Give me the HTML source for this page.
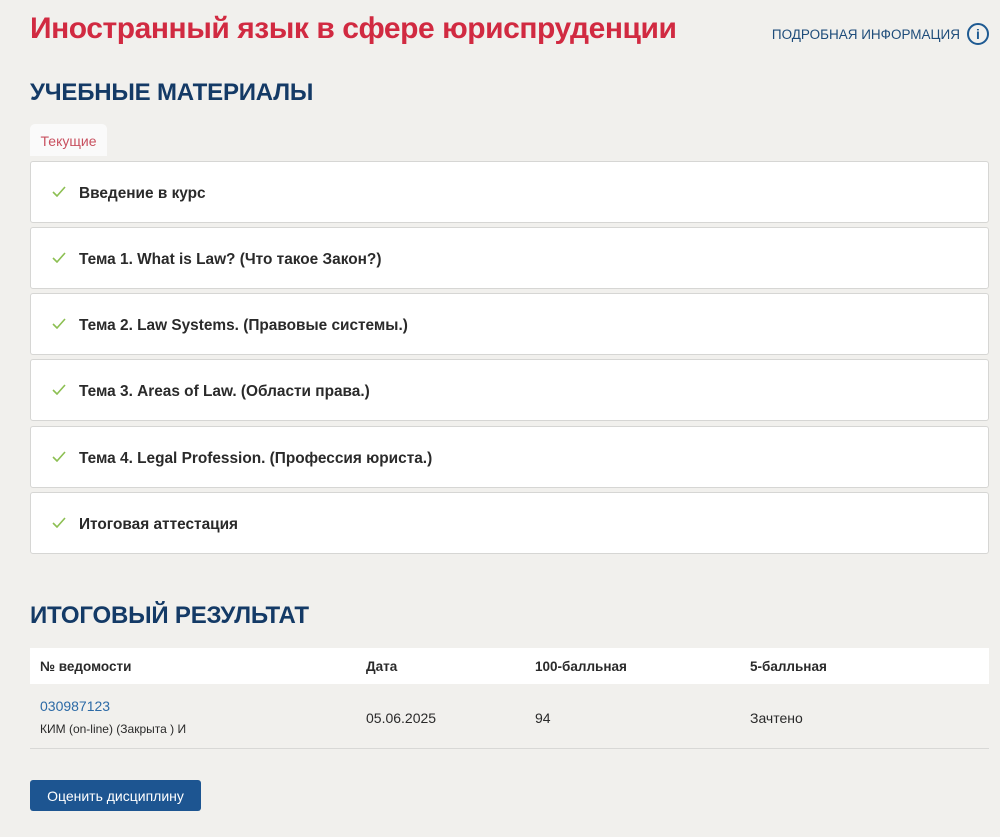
<!DOCTYPE html><html><head><meta charset="utf-8"><style>
body{margin:0;background:#f1f0ed;font-family:"Liberation Sans",sans-serif;width:1000px;height:837px;overflow:hidden;position:relative}
.a{position:absolute}
h1{position:absolute;left:30px;top:12px;margin:0;font-size:30px;font-weight:bold;color:#d12a41;letter-spacing:-0.45px}
.h2{position:absolute;left:30px;margin:0;font-size:24px;font-weight:bold;color:#143a66;letter-spacing:-0.2px}
.info{position:absolute;right:40px;top:27px;font-size:13.5px;color:#1e4c7a}
.ic{position:absolute;left:967px;top:23px;width:18px;height:18px;border:2px solid #1e5a92;border-radius:50%;color:#1e5a92;font-size:14px;font-weight:bold;text-align:center;line-height:18px}
.tab{position:absolute;left:30px;top:124px;width:77px;height:32px;background:#fafafa;border-radius:5px 5px 0 0;color:#c8505f;font-size:14px;line-height:34px;text-align:center}
.row{position:absolute;left:30px;width:957px;height:60px;background:#fff;border:1px solid #d6d6d4;border-radius:3px;font-size:15.4px;font-weight:bold;color:#2a2a2a;line-height:64px}
.row svg{position:absolute;left:21px;top:24px}
.row span.t{position:absolute;left:48px}
.th{position:absolute;left:30px;top:648px;width:959px;height:36px;background:#fff;font-size:13.5px;font-weight:bold;color:#2a2a2a;line-height:38px}
.tr{position:absolute;left:30px;top:684px;width:959px;height:64px;border-bottom:1px solid #d8d8d6;font-size:14px;color:#2a2a2a}
.btn{position:absolute;left:30px;top:780px;width:171px;height:31px;background:#1d5591;border-radius:3px;color:#fff;font-size:14px;line-height:32px;text-align:center}
</style></head><body>
<h1>Иностранный язык в сфере юриспруденции</h1>
<div class="info">ПОДРОБНАЯ ИНФОРМАЦИЯ</div><div class="ic">i</div>
<div class="h2" style="top:79px">УЧЕБНЫЕ МАТЕРИАЛЫ</div>
<div class="tab">Текущие</div>
<div class="row" style="top:161px"><svg width="14" height="11"><path d="M1 6l4 4 8-9" fill="none" stroke="#8cbf52" stroke-width="1.6"/></svg><span class="t">Введение в курс</span></div>
<div class="row" style="top:227px"><svg width="14" height="11"><path d="M1 6l4 4 8-9" fill="none" stroke="#8cbf52" stroke-width="1.6"/></svg><span class="t">Тема 1. What is Law? (Что такое Закон?)</span></div>
<div class="row" style="top:293px"><svg width="14" height="11"><path d="M1 6l4 4 8-9" fill="none" stroke="#8cbf52" stroke-width="1.6"/></svg><span class="t">Тема 2. Law Systems. (Правовые системы.)</span></div>
<div class="row" style="top:359px"><svg width="14" height="11"><path d="M1 6l4 4 8-9" fill="none" stroke="#8cbf52" stroke-width="1.6"/></svg><span class="t">Тема 3. Areas of Law. (Области права.)</span></div>
<div class="row" style="top:426px"><svg width="14" height="11"><path d="M1 6l4 4 8-9" fill="none" stroke="#8cbf52" stroke-width="1.6"/></svg><span class="t">Тема 4. Legal Profession. (Профессия юриста.)</span></div>
<div class="row" style="top:492px"><svg width="14" height="11"><path d="M1 6l4 4 8-9" fill="none" stroke="#8cbf52" stroke-width="1.6"/></svg><span class="t">Итоговая аттестация</span></div>
<div class="h2" style="top:602px">ИТОГОВЫЙ РЕЗУЛЬТАТ</div>
<div class="th"><span class="a" style="left:10px">№ ведомости</span><span class="a" style="left:336px">Дата</span><span class="a" style="left:505px">100-балльная</span><span class="a" style="left:720px">5-балльная</span></div>
<div class="tr"><span class="a" style="left:10px;top:14px;color:#2c6aa6">030987123</span><span class="a" style="left:10px;top:38px;font-size:12px">КИМ (on-line) (Закрыта ) И</span><span class="a" style="left:336px;top:26px">05.06.2025</span><span class="a" style="left:505px;top:26px">94</span><span class="a" style="left:720px;top:26px">Зачтено</span></div>
<div class="btn">Оценить дисциплину</div>
</body></html>
